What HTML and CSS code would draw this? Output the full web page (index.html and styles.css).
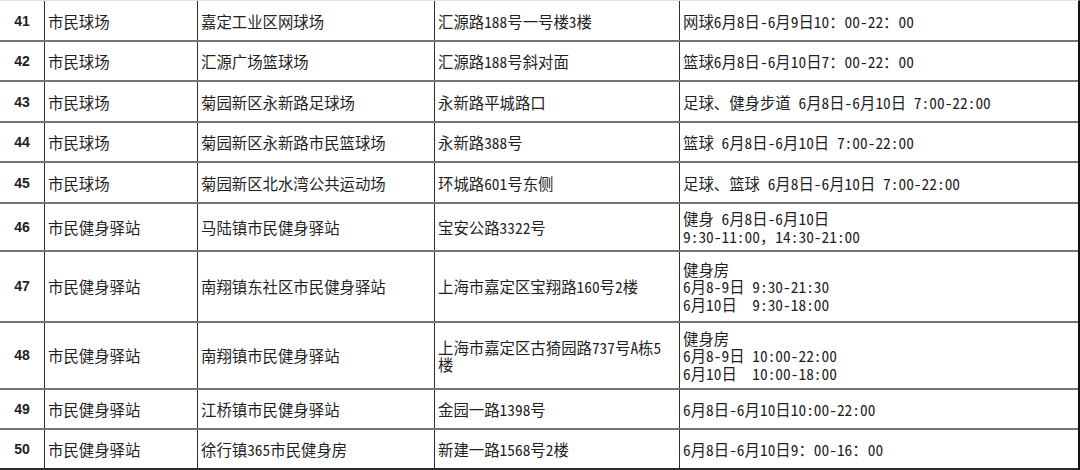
FILE: index.html
```html
<!DOCTYPE html>
<html lang="zh-CN">
<head>
<meta charset="utf-8">
<title>市民球场与健身驿站开放时间</title>
<link rel="stylesheet" href="styles.css">
</head>
<body>
<div class="sheet">
  <div class="row r1">
    <div class="c num">41</div><div class="c">市民球场</div><div class="c">嘉定工业区网球场</div><div class="c">汇源路188号一号楼3楼</div><div class="c">网球6月8日-6月9日10：00-22：00</div>
  </div>
  <div class="row r2">
    <div class="c num">42</div><div class="c">市民球场</div><div class="c">汇源广场篮球场</div><div class="c">汇源路188号斜对面</div><div class="c">篮球6月8日-6月10日7：00-22：00</div>
  </div>
  <div class="row r2">
    <div class="c num">43</div><div class="c">市民球场</div><div class="c">菊园新区永新路足球场</div><div class="c">永新路平城路口</div><div class="c">足球、健身步道 6月8日-6月10日 7:00-22:00</div>
  </div>
  <div class="row r2">
    <div class="c num">44</div><div class="c">市民球场</div><div class="c">菊园新区永新路市民篮球场</div><div class="c">永新路388号</div><div class="c">篮球 6月8日-6月10日 7:00-22:00</div>
  </div>
  <div class="row r2">
    <div class="c num">45</div><div class="c">市民球场</div><div class="c">菊园新区北水湾公共运动场</div><div class="c">环城路601号东侧</div><div class="c">足球、篮球 6月8日-6月10日 7:00-22:00</div>
  </div>
  <div class="row r46">
    <div class="c num">46</div><div class="c">市民健身驿站</div><div class="c">马陆镇市民健身驿站</div><div class="c">宝安公路3322号</div><div class="c">健身 6月8日-6月10日<br>9:30-11:00，14:30-21:00</div>
  </div>
  <div class="row r47">
    <div class="c num">47</div><div class="c">市民健身驿站</div><div class="c">南翔镇东社区市民健身驿站</div><div class="c">上海市嘉定区宝翔路160号2楼</div><div class="c">健身房<br>6月8-9日&nbsp;9:30-21:30<br>6月10日&nbsp;&nbsp;9:30-18:00</div>
  </div>
  <div class="row r48">
    <div class="c num">48</div><div class="c">市民健身驿站</div><div class="c">南翔镇市民健身驿站</div><div class="c">上海市嘉定区古猗园路737号A栋5楼</div><div class="c">健身房<br>6月8-9日&nbsp;10:00-22:00<br>6月10日&nbsp;&nbsp;10:00-18:00</div>
  </div>
  <div class="row r2">
    <div class="c num">49</div><div class="c">市民健身驿站</div><div class="c">江桥镇市民健身驿站</div><div class="c">金园一路1398号</div><div class="c">6月8日-6月10日10:00-22:00</div>
  </div>
  <div class="row r50">
    <div class="c num">50</div><div class="c">市民健身驿站</div><div class="c">徐行镇365市民健身房</div><div class="c">新建一路1568号2楼</div><div class="c">6月8日-6月10日9：00-16：00</div>
  </div>
</div>
</body>
</html>
```

FILE: styles.css
```css
html, body {
  margin: 0;
  padding: 0;
  background: #ffffff;
  overflow: hidden;
}

.sheet {
  width: 1080px;
  box-sizing: border-box;
  border-top: 1px solid #dce2ee;
  border-right: 2px solid #111111;
  font-family: "Noto Sans Mono CJK SC", "Noto Sans CJK SC", sans-serif;
  font-size: 15.4px;
  line-height: 17.6px;
  color: #1f1f1f;
}

.row {
  display: grid;
  grid-template-columns: 44px 153px 237px 245px 1fr;
  box-sizing: border-box;
  border-bottom: 2px solid #737373;
}

.r1 { height: 40.7px; }
.r2 { height: 40.5px; }
.r46 { height: 48px; }
.r47 { height: 71px; }
.r48 { height: 67px; }
.r50 { height: 40px; border-bottom-color: #2a2a2a; }

.c {
  display: flex;
  flex-direction: column;
  justify-content: center;
  box-sizing: border-box;
  border-left: 1px solid #2e2e2e;
  padding: 2px 3px 0 3px;
  overflow: hidden;
}

.c.num {
  border-left: none;
  align-items: center;
  padding: 2px 0 0 0;
  font-family: "Liberation Sans", Arial, sans-serif;
  font-weight: bold;
  font-size: 14px;
}
```
